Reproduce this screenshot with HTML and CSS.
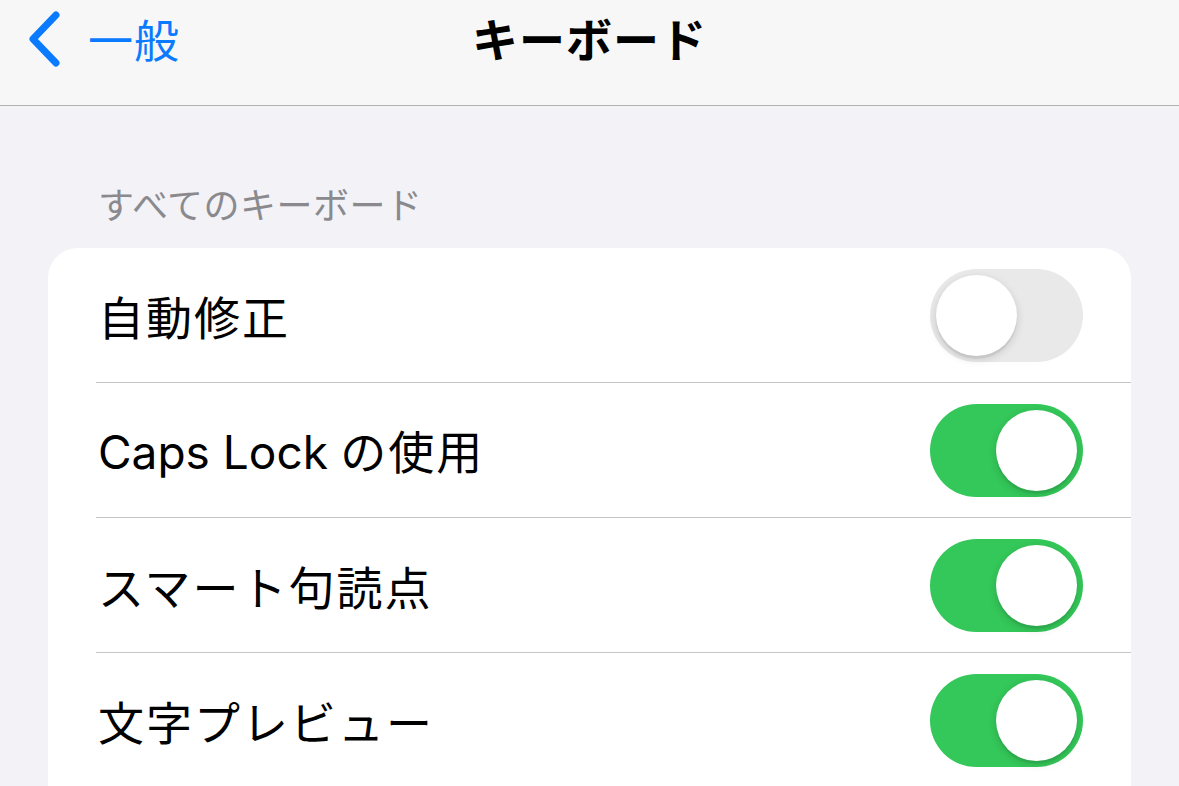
FILE: index.html
```html
<!DOCTYPE html>
<html lang="ja">
<head>
<meta charset="utf-8">
<link rel="stylesheet" href="styles.css">
</head>
<body>
<header class="nav">
  <div class="back">
    <svg class="chev" width="36" height="58" viewBox="0 0 36 58"><path d="M30 5 L7 29 L30 53" fill="none" stroke="#0a7aff" stroke-width="7" stroke-linecap="round" stroke-linejoin="round"/></svg>
    <span class="back-label">一般</span>
  </div>
  <h1 class="title">キーボード</h1>
</header>
<main class="content">
  <div class="section-header">すべてのキーボード</div>
  <div class="card">
    <div class="row">
      <span class="label">自動修正</span>
      <span class="toggle off"><span class="knob"></span></span>
    </div>
    <div class="row">
      <span class="label"><span class="latin">Caps Lock</span> の使用</span>
      <span class="toggle on"><span class="knob"></span></span>
    </div>
    <div class="row">
      <span class="label">スマート句読点</span>
      <span class="toggle on"><span class="knob"></span></span>
    </div>
    <div class="row">
      <span class="label">文字プレビュー</span>
      <span class="toggle on"><span class="knob"></span></span>
    </div>
  </div>
</main>
</body>
</html>
```
FILE: styles.css
```css
* { box-sizing: border-box; }
html, body { margin: 0; padding: 0; }
body {
  width: 1179px;
  height: 786px;
  overflow: hidden;
  background: #f2f2f7;
  font-family: "Noto Sans CJK JP", "Noto Sans", sans-serif;
  color: #000;
}
.nav {
  height: 106px;
  background: #f7f7f7;
  border-bottom: 1px solid #b2b2b2;
  position: relative;
  display: flex;
  align-items: flex-start;
  justify-content: center;
}
.back {
  position: absolute;
  left: 26px;
  top: 10px;
  display: flex;
  align-items: center;
  gap: 26px;
}
.chev { display: block; }
.back-label {
  color: #0a7aff;
  font-size: 45px;
  line-height: 58px;
  letter-spacing: 1px;
}
.title {
  margin: 0;
  padding-top: 8px;
  font-size: 46px;
  font-weight: 700;
  line-height: 58px;
  letter-spacing: 1px;
}
.content {
  padding: 0 48px 0 48px;
}
.section-header {
  padding: 72px 0 0 50px;
  height: 142px;
  font-size: 36px;
  line-height: 50px;
  color: #8a8a8e;
  letter-spacing: 0.5px;
}
.card {
  background: #fff;
  border-radius: 30px 30px 0 0;
  width: 1083px;
  padding-left: 48px;
}
.row {
  height: 135px;
  display: flex;
  align-items: center;
  justify-content: space-between;
  padding-right: 48px;
  border-bottom: 1px solid #c6c6c8;
}
.label {
  font-size: 46px;
  line-height: 60px;
  padding-left: 2px;
  letter-spacing: 2px;
}
.latin {
  font-family: "Inter", "Noto Sans", sans-serif;
  letter-spacing: 0;
}
.toggle {
  width: 153px;
  height: 93px;
  border-radius: 47px;
  position: relative;
  display: block;
}
.toggle.off { background: #e9e9ea; }
.toggle.on { background: #34c759; }
.knob {
  position: absolute;
  top: 6px;
  width: 81px;
  height: 81px;
  border-radius: 50%;
  background: #fff;
  box-shadow: 0 3px 8px rgba(0,0,0,0.15), 0 3px 1px rgba(0,0,0,0.06);
}
.toggle.off .knob { left: 6px; }
.toggle.on .knob { left: 66px; }
```
